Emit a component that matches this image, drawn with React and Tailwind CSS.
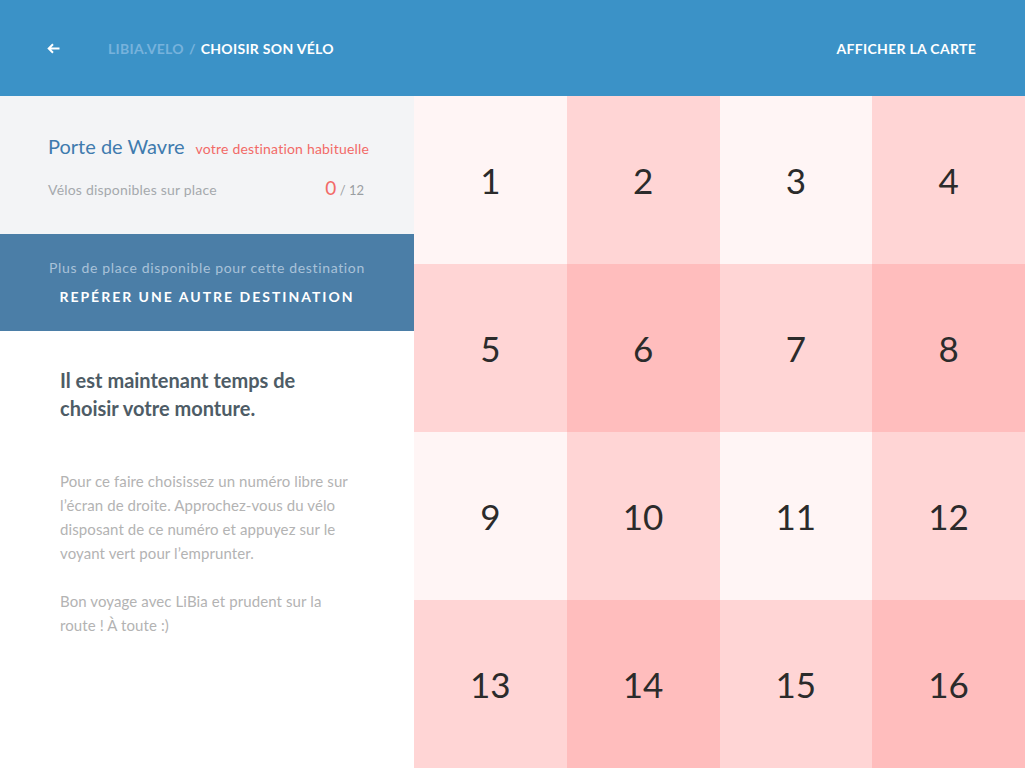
import React from 'react';

const cells = [
  { n: 1, c: 'bg-[#fff5f5]' },
  { n: 2, c: 'bg-[#ffd5d5]' },
  { n: 3, c: 'bg-[#fff5f5]' },
  { n: 4, c: 'bg-[#ffd5d5]' },
  { n: 5, c: 'bg-[#ffd5d5]' },
  { n: 6, c: 'bg-[#ffbdbd]' },
  { n: 7, c: 'bg-[#ffd5d5]' },
  { n: 8, c: 'bg-[#ffbdbd]' },
  { n: 9, c: 'bg-[#fff5f5]' },
  { n: 10, c: 'bg-[#ffd5d5]' },
  { n: 11, c: 'bg-[#fff5f5]' },
  { n: 12, c: 'bg-[#ffd5d5]' },
  { n: 13, c: 'bg-[#ffd5d5]' },
  { n: 14, c: 'bg-[#ffbdbd]' },
  { n: 15, c: 'bg-[#ffd5d5]' },
  { n: 16, c: 'bg-[#ffbdbd]' },
];

function Header() {
  return (
    <header className="h-[96px] bg-[#3b92c7] flex items-center px-[47px] text-[14px] font-bold uppercase tracking-[0.3px]">
      <button className="w-[14px] text-white flex items-center">
        <svg width="13" height="11" viewBox="0 0 13 11" fill="none" stroke="white" strokeWidth="2">
          <path d="M12.5 5.5H2M6 1.2L1.7 5.5L6 9.8" />
        </svg>
      </button>
      <div className="ml-[47px] flex gap-[5px]">
        <span className="text-[#77b2dc]">Libia.velo</span>
        <span className="text-[#77b2dc]">/</span>
        <span className="text-white">Choisir son vélo</span>
      </div>
      <div className="ml-auto text-white mr-[2px]">Afficher la carte</div>
    </header>
  );
}

function Sidebar() {
  return (
    <aside className="w-[414px] shrink-0 flex flex-col bg-white">
      <div className="h-[138px] bg-[#f3f4f6] px-[48px] pt-[35px]">
        <div className="flex items-baseline gap-[11px] whitespace-nowrap">
          <span className="text-[20px] text-[#3f7bae]">Porte de Wavre</span>
          <span className="text-[14px] text-[#f26a67] tracking-[0.2px]">votre destination habituelle</span>
        </div>
        <div className="flex items-baseline justify-between mt-[13px] pr-[2px] whitespace-nowrap">
          <span className="text-[14px] text-[#a5a9ad] tracking-[0.2px]">Vélos disponibles sur place</span>
          <span className="text-[#9a9ea2] text-[13px]">
            <span className="text-[19px] text-[#f26a67]">0</span> / 12
          </span>
        </div>
      </div>
      <div className="h-[97px] bg-[#4b7ea7] flex flex-col items-center pt-[23px] whitespace-nowrap">
        <span className="text-[14px] text-[#a9c2d9] tracking-[0.65px]">Plus de place disponible pour cette destination</span>
        <span className="text-[14px] font-bold text-white tracking-[2px] mt-[8px]">REPÉRER UNE AUTRE DESTINATION</span>
      </div>
      <div className="px-[60px] pt-[35px]">
        <h2 className="text-[20px] font-bold leading-[28px] text-[#4e5c66]">
          Il est maintenant temps de<br />choisir votre monture.
        </h2>
        <div className="mt-[47px] text-[15px] leading-[24px] text-[#b3b3b3] tracking-[0.1px] pr-[2px]">
          <p>Pour ce faire choisissez un numéro libre sur l’écran de droite. Approchez-vous du vélo disposant de ce numéro et appuyez sur le voyant vert pour l’emprunter.</p>
          <p className="mt-[24px]">Bon voyage avec LiBia et prudent sur la route ! À toute :)</p>
        </div>
      </div>
    </aside>
  );
}

export default function App() {
  return (
    <div className="w-[1025px] h-[768px] flex flex-col overflow-hidden font-['Lato','Noto_Sans',sans-serif]">
      <Header />
      <div className="flex flex-1">
        <Sidebar />
        <main className="flex-1 grid grid-cols-4 grid-rows-4">
          {cells.map((cell) => (
            <button
              key={cell.n}
              className={`${cell.c} flex items-center justify-center text-[35px] text-[#2b2b2b]`}
            >
              {cell.n}
            </button>
          ))}
        </main>
      </div>
    </div>
  );
}
